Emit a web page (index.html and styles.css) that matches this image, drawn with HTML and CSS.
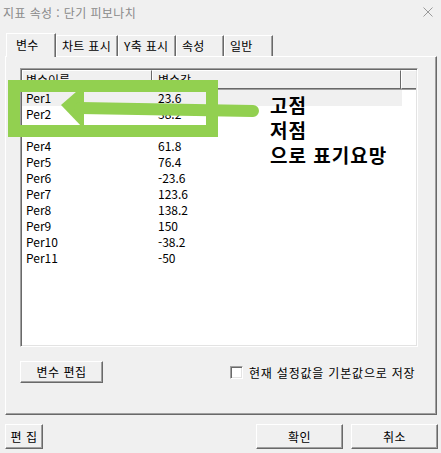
FILE: index.html
```html
<!DOCTYPE html>
<html lang="ko">
<head>
    <meta charset="UTF-8">
    <meta name="viewport" content="width=device-width, initial-scale=1.0">
    <title>지표 속성</title>
    <link rel="stylesheet" href="styles.css">
</head>
<body>
    <div class="dialog">
        <div class="titlebar">
            <span class="title">지표 속성 : 단기 피보나치</span>
            <svg class="close" width="10" height="10" viewBox="0 0 10 10">
                <path d="M0.5 0.5L9.5 9.5M9.5 0.5L0.5 9.5" stroke="#9a9a9a" stroke-width="1" fill="none"/>
            </svg>
        </div>

        <div class="tabs">
            <div class="tab active tab-var">변수</div>
            <div class="tab tab-chart">차트 표시</div>
            <div class="tab tab-y">Y축 표시</div>
            <div class="tab tab-attr">속성</div>
            <div class="tab tab-general">일반</div>
        </div>

        <div class="panel">
            <div class="listview">
                <div class="lv-header">
                    <div class="col col-name">변수이름</div>
                    <div class="col col-value">변수값</div>
                    <div class="col col-fill"></div>
                </div>
                <div class="lv-body">
                    <div class="row selected"><span class="name">Per1</span><span class="value">23.6</span></div>
                    <div class="row"><span class="name">Per2</span><span class="value">38.2</span></div>
                    <div class="row"><span class="name">Per3</span><span class="value">50</span></div>
                    <div class="row"><span class="name">Per4</span><span class="value">61.8</span></div>
                    <div class="row"><span class="name">Per5</span><span class="value">76.4</span></div>
                    <div class="row"><span class="name">Per6</span><span class="value">-23.6</span></div>
                    <div class="row"><span class="name">Per7</span><span class="value">123.6</span></div>
                    <div class="row"><span class="name">Per8</span><span class="value">138.2</span></div>
                    <div class="row"><span class="name">Per9</span><span class="value">150</span></div>
                    <div class="row"><span class="name">Per10</span><span class="value">-38.2</span></div>
                    <div class="row"><span class="name">Per11</span><span class="value">-50</span></div>
                </div>
            </div>

            <div class="panel-footer">
                <button class="btn btn-edit-var">변수 편집</button>
                <label class="check">
                    <span class="box"></span>
                    <span>현재 설정값을 기본값으로 저장</span>
                </label>
            </div>
        </div>

        <div class="bottom-bar">
            <button class="btn btn-edit">편 집</button>
            <div class="spacer"></div>
            <button class="btn btn-ok">확인</button>
            <button class="btn btn-cancel">취소</button>
        </div>

        <!-- green markup drawn on top of the list -->
        <svg class="markup" width="441" height="453" viewBox="0 0 441 453">
            <rect x="14" y="86" width="198" height="45" fill="none" stroke="#92d050" stroke-width="12"/>
            <polygon points="61,105 84,85 84,129" fill="#92d050"/>
            <line x1="80" y1="108" x2="253" y2="111" stroke="#92d050" stroke-width="12" stroke-linecap="round"/>
        </svg>
        <div class="memo">고점<br>저점<br>으로 표기요망</div>
    </div>
</body>
</html>
```

FILE: styles.css
```css
body {
    margin: 0;
    background: #f0f0f0;
    font-family: "Noto Sans CJK KR", "Noto Sans", sans-serif;
    font-size: 12px;
    color: #000;
    overflow: hidden;
}

.dialog {
    position: relative;
    width: 441px;
    height: 453px;
    display: flex;
    flex-direction: column;
}

.titlebar {
    height: 25px;
    display: flex;
    align-items: center;
    justify-content: space-between;
    padding: 0 8px 0 3px;
}

.title {
    color: #8a8a8a;
    font-size: 12px;
    line-height: 24px;
    letter-spacing: 0.4px;
}

.close {
    margin-top: -2px;
}

/* tab strip */
.tabs {
    display: flex;
    align-items: flex-start;
    height: 23px;
    margin-top: 8px;
    padding-left: 6px;
    position: relative;
    z-index: 1;
}

.tab {
    height: 21px;
    margin-top: 2px;
    box-sizing: border-box;
    line-height: 19px;
    padding-left: 5px;
    letter-spacing: 0.3px;
    border-top: 1px solid #fff;
    border-left: 1px solid #fff;
    border-right: 1px solid #696969;
    box-shadow: inset -1px 0 #a0a0a0;
    background: #f0f0f0;
}

.tab.active {
    height: 24px;
    margin-top: 0;
    line-height: 21px;
    padding-left: 9px;
}

.tab-var { width: 50px; }
.tab-chart { width: 62px; }
.tab-y { width: 58px; }
.tab-attr { width: 48px; }
.tab-general { width: 49px; }

.panel {
    margin-left: 5px;
    width: 432px;
    height: 359px;
    box-sizing: border-box;
    border-top: 1px solid #fff;
    border-left: 1px solid #fff;
    border-right: 1px solid #696969;
    border-bottom: 1px solid #696969;
    box-shadow: inset -1px -1px #a0a0a0;
}

/* list view */
.listview {
    margin: 11px 0 0 14px;
    width: 398px;
    height: 279px;
    box-sizing: border-box;
    background: #fff;
    border: 1px solid;
    border-color: #a0a0a0 #fff #fff #a0a0a0;
    box-shadow: inset 1px 1px #696969, inset -1px -1px #e3e3e3;
    padding: 1px;
    overflow: hidden;
}

.lv-header {
    display: flex;
    height: 20px;
    background: #f0f0f0;
    box-shadow: inset 0 -1px #a0a0a0;
}

.col {
    box-sizing: border-box;
    height: 19px;
    line-height: 17px;
    border-top: 1px solid #fff;
    border-left: 1px solid #fff;
    border-right: 1px solid #696969;
    border-bottom: 1px solid #696969;
}

.col-name { width: 130px; padding-left: 3px; }
.col-value { width: 249px; padding-left: 5px; }
.col-fill { flex: 1; border-right: none; }

.row {
    display: flex;
    width: 380px;
    height: 16px;
    line-height: 16px;
}

.row.selected {
    background: #f0f0f0;
}

.row .name {
    width: 132px;
    padding-left: 4px;
}

/* footer of the tab page */
.panel-footer {
    display: flex;
    align-items: center;
    height: 22px;
    margin-top: 14px;
    padding-left: 14px;
}

.btn {
    box-sizing: border-box;
    font-family: inherit;
    font-size: 12px;
    letter-spacing: 0.5px;
    color: #000;
    background: #f0f0f0;
    border: 1px solid;
    border-color: #fff #696969 #696969 #fff;
    box-shadow: inset -1px -1px #a0a0a0;
    padding: 0;
    line-height: 18px;
}

.btn-edit-var {
    width: 83px;
    height: 22px;
}

.check {
    display: flex;
    align-items: center;
    margin-left: 127px;
    gap: 6px;
    white-space: nowrap;
    letter-spacing: 0.8px;
}

.box {
    width: 13px;
    height: 13px;
    box-sizing: border-box;
    background: #fff;
    border: 1px solid;
    border-color: #a0a0a0 #fff #fff #a0a0a0;
    box-shadow: inset 1px 1px #696969, inset -1px -1px #e3e3e3;
}

/* dialog buttons */
.bottom-bar {
    display: flex;
    margin-top: 9px;
    padding: 0 3px 0 5px;
    gap: 8px;
}

.bottom-bar .btn {
    height: 25px;
}

.spacer { flex: 1; }

.btn-edit { width: 38px; }
.btn-ok, .btn-cancel { width: 87px; }

/* hand-drawn annotation */
.markup {
    position: absolute;
    top: 0;
    left: 0;
    pointer-events: none;
}

.memo {
    position: absolute;
    left: 270px;
    top: 92px;
    font-size: 19px;
    font-weight: bold;
    line-height: 25px;
    letter-spacing: 1px;
}
```
